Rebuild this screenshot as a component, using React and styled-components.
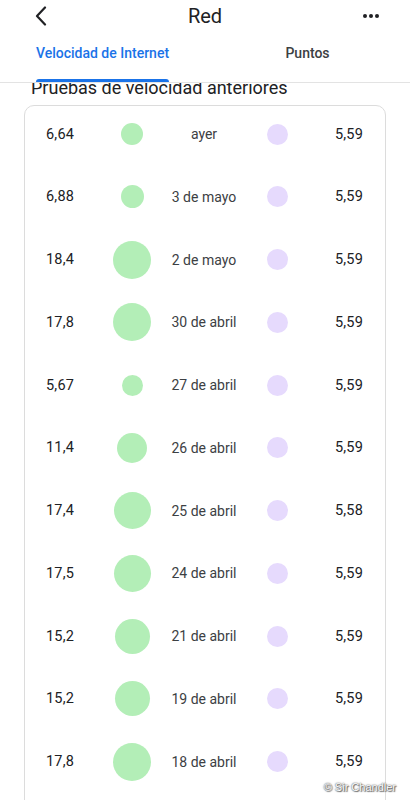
import React from "react";
import styled, { createGlobalStyle } from "styled-components";

const Global = createGlobalStyle`
  html, body { margin: 0; padding: 0; background: #fff; }
  body { font-family: Roboto, "Noto Sans", Arial, sans-serif; -webkit-font-smoothing: antialiased; }
  * { box-sizing: border-box; }
`;

const Page = styled.div`
  width: 410px;
  height: 800px;
  display: flex;
  flex-direction: column;
  overflow: hidden;
  position: relative;
  background: #fff;
`;

const Header = styled.header`
  flex: none;
  background: #fff;
  border-bottom: 1px solid #e3e3e3;
  position: relative;
  z-index: 2;
`;

const TopBar = styled.div`
  height: 32px;
  display: grid;
  grid-template-columns: 48px 1fr 48px;
  align-items: center;
`;

const IconButton = styled.button`
  border: 0;
  background: none;
  padding: 0;
  display: flex;
  align-items: center;
  justify-content: ${(p) => p.$align || "center"};
  height: 32px;
  color: #202124;
  cursor: pointer;
`;

const Title = styled.h1`
  margin: 0;
  text-align: center;
  font-size: 20px;
  font-weight: 400;
  color: #202124;
  line-height: 30px;
`;

const Tabs = styled.nav`
  height: 50px;
  display: grid;
  grid-template-columns: 1fr 1fr;
`;

const Tab = styled.div`
  display: flex;
  flex-direction: column;
  align-items: center;
  justify-content: flex-end;
`;

const TabLabel = styled.span`
  position: relative;
  font-size: 14px;
  font-weight: 500;
  color: ${(p) => (p.$active ? "#1a73e8" : "#3c4043")};
  line-height: 20px;
  padding: 0 1px 19px;
  &::after {
    content: "";
    display: ${(p) => (p.$active ? "block" : "none")};
    position: absolute;
    left: 1px;
    right: 1px;
    bottom: 0;
    height: 3px;
    border-radius: 3px 3px 0 0;
    background: #1a73e8;
  }
`;

const Scroll = styled.main`
  flex: 1;
  overflow: hidden;
  position: relative;
  z-index: 1;
`;

const Content = styled.div`
  margin-top: -6px;
`;

const Heading = styled.h2`
  margin: 0 0 6px 31px;
  font-size: 18px;
  font-weight: 400;
  line-height: 22px;
  color: #202124;
`;

const Card = styled.section`
  margin: 0 24px;
  border: 1px solid #dcdcdc;
  border-radius: 10px;
  padding: 8px 0 40px;
  display: flex;
  flex-direction: column;
  gap: 22.75px;
`;

const Row = styled.div`
  height: 40px;
  display: grid;
  grid-template-columns: 62px 48px 96px 50px 61px;
  padding-left: 21px;
  align-items: center;
  font-size: 14.5px;
  color: #202124;
`;

const Value = styled.span`
  text-align: ${(p) => (p.$right ? "right" : "left")};
  font-weight: 400;
  letter-spacing: 0.2px;
`;

const DateText = styled.span`
  text-align: center;
  font-size: 14px;
  color: #3c4043;
`;

const DotCell = styled.div`
  display: flex;
  justify-content: center;
  align-items: center;
`;

const Dot = styled.div`
  border-radius: 50%;
  background: ${(p) => (p.$tone === "down" ? "#b3eeb7" : "#e6dafd")};
`;

const Watermark = styled.div`
  position: absolute;
  right: 14px;
  bottom: 7px;
  font-family: "Liberation Sans Narrow", "Liberation Sans", Arial, sans-serif;
  font-size: 11px;
  color: #fff;
  text-shadow: 0 0 1px #555, 0 0 2px #777, 1px 1px 1px #666;
  z-index: 3;
`;

const rows = [
  ["6,64", 22, "ayer", "5,59"],
  ["6,88", 23, "3 de mayo", "5,59"],
  ["18,4", 38, "2 de mayo", "5,59"],
  ["17,8", 38, "30 de abril", "5,59"],
  ["5,67", 21, "27 de abril", "5,59"],
  ["11,4", 30, "26 de abril", "5,59"],
  ["17,4", 37, "25 de abril", "5,58"],
  ["17,5", 37, "24 de abril", "5,59"],
  ["15,2", 35, "21 de abril", "5,59"],
  ["15,2", 35, "19 de abril", "5,59"],
  ["17,8", 38, "18 de abril", "5,59"],
];

export default function App() {
  return (
    <>
      <Global />
      <Page>
        <Header>
          <TopBar>
            <IconButton $align="flex-end" aria-label="Atrás">
              <svg width="14" height="20" viewBox="0 0 14 20" fill="none">
                <path d="M11 1.5 L3 10 L11 18.5" stroke="#202124" strokeWidth="2.2" strokeLinecap="round" strokeLinejoin="round" />
              </svg>
            </IconButton>
            <Title>Red</Title>
            <IconButton $align="flex-start" aria-label="Más">
              <svg width="18" height="6" viewBox="0 0 18 6" fill="#202124">
                <circle cx="3" cy="3" r="2" />
                <circle cx="9" cy="3" r="2" />
                <circle cx="15" cy="3" r="2" />
              </svg>
            </IconButton>
          </TopBar>
          <Tabs>
            <Tab>
              <TabLabel $active>Velocidad de Internet</TabLabel>
            </Tab>
            <Tab>
              <TabLabel>Puntos</TabLabel>
            </Tab>
          </Tabs>
        </Header>
        <Scroll>
          <Content>
            <Heading>Pruebas de velocidad anteriores</Heading>
            <Card>
              {rows.map(([down, size, date, up], i) => (
                <Row key={i}>
                  <Value>{down}</Value>
                  <DotCell>
                    <Dot $tone="down" style={{ width: size, height: size }} />
                  </DotCell>
                  <DateText>{date}</DateText>
                  <DotCell>
                    <Dot $tone="up" style={{ width: 21, height: 21 }} />
                  </DotCell>
                  <Value $right>{up}</Value>
                </Row>
              ))}
            </Card>
          </Content>
        </Scroll>
        <Watermark>© Sir Chandler</Watermark>
      </Page>
    </>
  );
}
